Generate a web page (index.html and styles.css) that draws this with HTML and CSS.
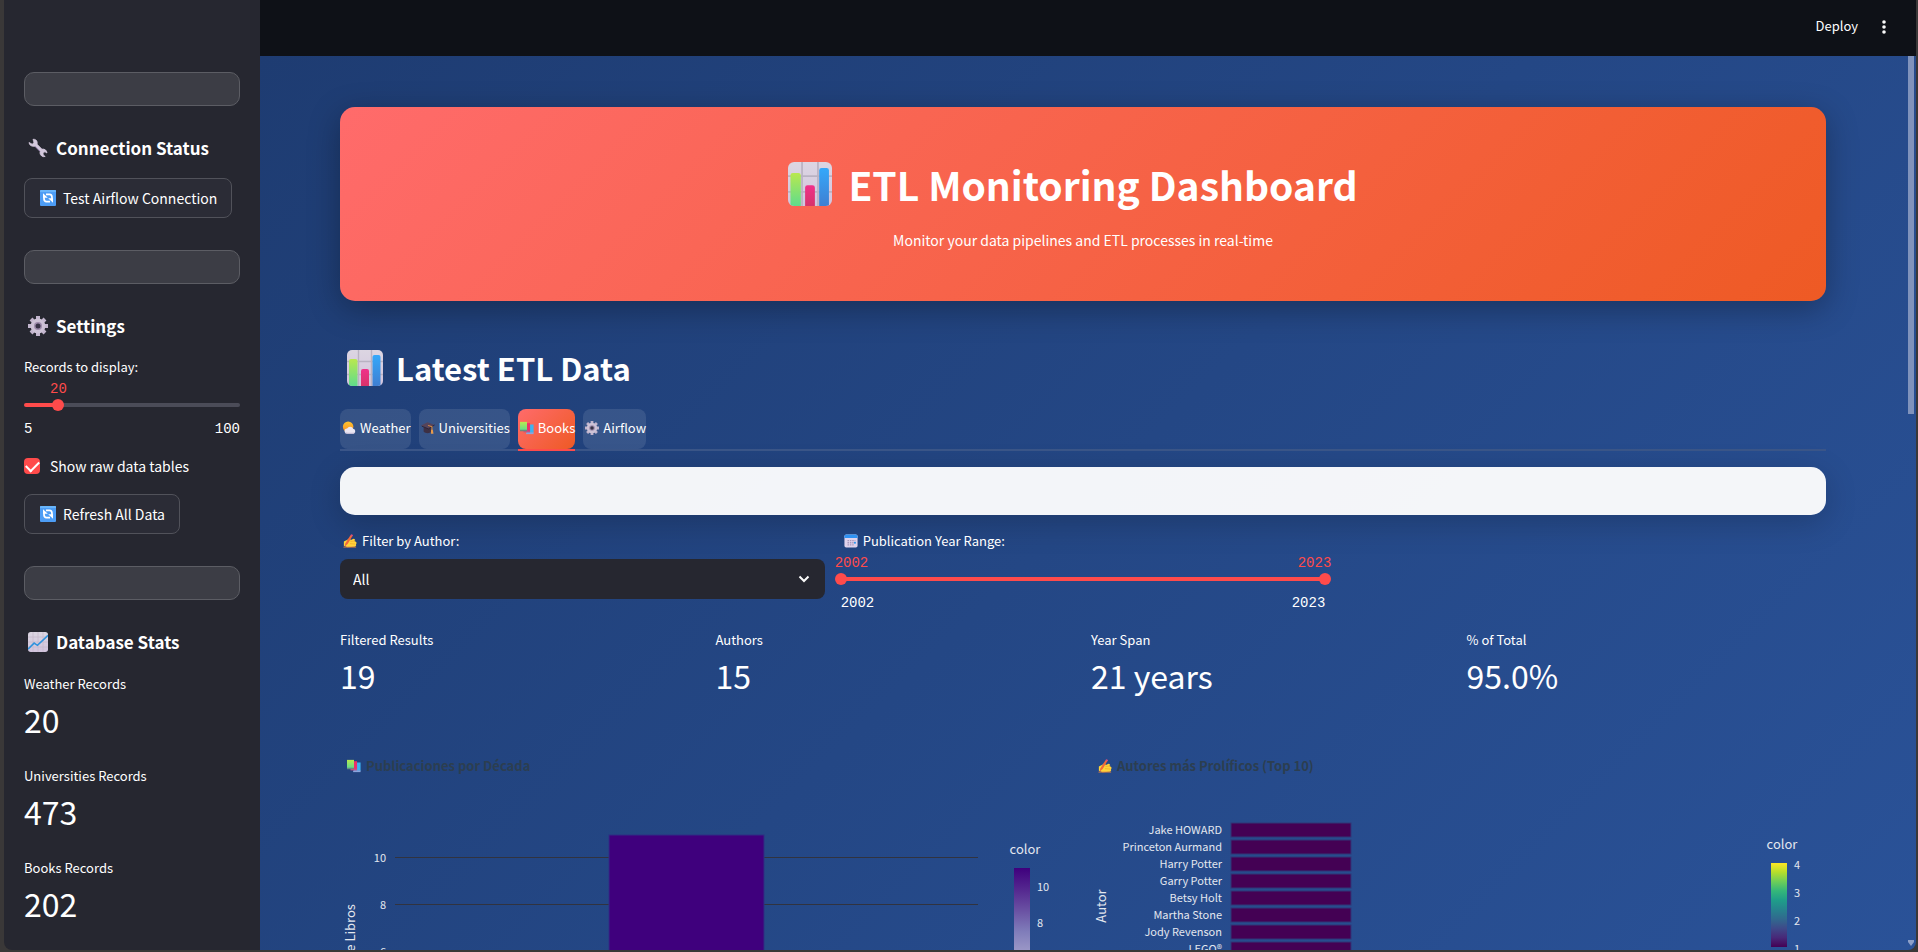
FILE: index.html
```html
<!DOCTYPE html>
<html lang="en">
<head>
<meta charset="utf-8">
<title>ETL Monitoring Dashboard</title>
<link rel="stylesheet" href="styles.css">
</head>
<body>
<svg class="defs" aria-hidden="true">
  <defs>
    <linearGradient id="gGreen" x1="0" y1="0" x2="0" y2="1"><stop offset="0" stop-color="#b9e84f"/><stop offset="1" stop-color="#5fdc8c"/></linearGradient>
    <linearGradient id="gPink" x1="0" y1="0" x2="0" y2="1"><stop offset="0" stop-color="#f0308a"/><stop offset="1" stop-color="#d6336a"/></linearGradient>
    <linearGradient id="gBlue" x1="0" y1="0" x2="0" y2="1"><stop offset="0" stop-color="#35a8fa"/><stop offset="1" stop-color="#3f7fd2"/></linearGradient>
    <linearGradient id="gPaper" x1="0" y1="0" x2="0" y2="1"><stop offset="0" stop-color="#dcd6e2"/><stop offset="1" stop-color="#d2c4dd"/></linearGradient>
    <linearGradient id="gSun" x1="0" y1="0" x2="0" y2="1"><stop offset="0" stop-color="#ffc52e"/><stop offset="1" stop-color="#f88f24"/></linearGradient>
    <linearGradient id="gPurples" x1="0" y1="0" x2="0" y2="1"><stop offset="0" stop-color="#3f007d"/><stop offset=".125" stop-color="#54278f"/><stop offset=".25" stop-color="#6a51a3"/><stop offset=".375" stop-color="#807dba"/><stop offset=".5" stop-color="#9e9ac8"/><stop offset=".75" stop-color="#dadaeb"/><stop offset="1" stop-color="#fcfbfd"/></linearGradient>
    <linearGradient id="gViridis" x1="0" y1="0" x2="0" y2="1"><stop offset="0" stop-color="#fde725"/><stop offset=".11" stop-color="#b5de2b"/><stop offset=".22" stop-color="#6ece58"/><stop offset=".33" stop-color="#35b779"/><stop offset=".44" stop-color="#1f9e89"/><stop offset=".56" stop-color="#26828e"/><stop offset=".67" stop-color="#31688e"/><stop offset=".78" stop-color="#3e4989"/><stop offset=".89" stop-color="#482878"/><stop offset="1" stop-color="#440154"/></linearGradient>
    <clipPath id="cRound"><rect width="36" height="36" rx="5"/></clipPath>
  </defs>
  <symbol id="i-bars" viewBox="0 0 36 36">
    <g clip-path="url(#cRound)"><rect width="36" height="36" fill="url(#gPaper)"/>
    <path d="M11.500 0V36M24.500 0V36M0 11.500H36M0 24.500H36" stroke="#b9b2c2" stroke-width="1.400"/>
    <path d="M2 36V11a2 2 0 0 1 2-2h4.500a2 2 0 0 1 2 2V36z" fill="url(#gGreen)"/>
    <path d="M14 36V21a2 2 0 0 1 2-2h4a2 2 0 0 1 2 2V36z" fill="url(#gPink)"/>
    <path d="M25.500 36V7a2 2 0 0 1 2-2h4a2 2 0 0 1 2 2V36z" fill="url(#gBlue)"/></g>
  </symbol>
  <symbol id="i-trend" viewBox="0 0 36 36">
    <g clip-path="url(#cRound)"><rect width="36" height="36" fill="url(#gPaper)"/>
    <path d="M9 0V36M18 0V36M27 0V36M0 9H36M0 18H36M0 27H36" stroke="#c6b8ca" stroke-width="1.300"/>
    <path d="M0 31L11 20L17 24L36 6" fill="none" stroke="#2f93dd" stroke-width="2.800"/></g>
  </symbol>
  <symbol id="i-wrench" viewBox="0 0 20 20">
    <path d="M1 4.500L4.200 6.200L6 4.600L5 1.300C7 1 9 2.200 9.200 4.300L9.100 6.300L14 11.200C16.300 10.700 18.700 12 19 15L17 13.800L15 14.600L15.200 17L17.200 18.500C14.500 19.300 12.300 17.400 12 15.200L12.100 13.300L7 8.200C4 8.900 1.200 7.400 1 4.500Z" fill="#d3c8dc" stroke="#d3c8dc" stroke-width=".8"/>
    <path d="M7 8.200L12.100 13.300" stroke="#a790c0" stroke-width="1"/>
  </symbol>
  <symbol id="i-gear" viewBox="0 0 20 20">
    <g stroke="#c2b5cd" stroke-width="4"><path d="M10 0V20M0 10H20M3 3L17 17M17 3L3 17"/></g>
    <circle cx="10" cy="10" r="7.400" fill="#cdc2d6"/><circle cx="10" cy="10" r="4" fill="#9d8bab"/><circle cx="10" cy="10" r="2.500" fill="#373246"/>
  </symbol>
  <symbol id="i-refresh" viewBox="0 0 16 16">
    <rect width="16" height="16" rx="1" fill="#4d9df5"/><path d="M0 1a1 1 0 0 1 1-1h14a1 1 0 0 1 1 1v1H0z" fill="#68b5fb"/>
    <path d="M6 4.300H9.500C11.300 4.300 12 5.500 12 7.500V9M10 11.700H6.500C4.700 11.700 4 10.500 4 8.500V7" fill="none" stroke="#fff" stroke-width="1.700"/>
    <path d="M3 3.200V7.800H7.800zM13 12.800V8.200H8.200z" fill="#fff"/>
  </symbol>
  <symbol id="i-weather" viewBox="0 0 16 16">
    <circle cx="7" cy="6.500" r="6" fill="url(#gSun)"/>
    <path d="M6 14.500a3 3 0 0 1-.2-6 4 4 0 0 1 7 .4 2.900 2.900 0 0 1 .4 5.600z" fill="#ece7f2"/><path d="M6 14.500h7.200a2.900 2.900 0 0 0 2-2c-3 1.500-8 1-11.800.3a3 3 0 0 0 2.600 1.700z" fill="#c6bdd6"/>
  </symbol>
  <symbol id="i-cap" viewBox="0 0 16 16">
    <path d="M3 7v5c2 2.500 7 2.500 9 0V7z" fill="#3d3044"/><path d="M0 5L7.500 1.500L15.500 4.500L8.500 9z" fill="#55445b"/><path d="M1 6L8.500 9L15.500 4.500" fill="none" stroke="#2b2233"/>
    <path d="M8 5L12.500 6.500V11" fill="none" stroke="#d58a43" stroke-width="1.200"/><path d="M11.500 10h2l.8 4.500h-3z" fill="#e79b4c"/>
  </symbol>
  <symbol id="i-books" viewBox="0 0 16 16">
    <path d="M8 4h7.500v9.500H8z" fill="#3cb4f2"/><path d="M7 13h8.500v2H7z" fill="#8ba6df"/>
    <path d="M5 2.500h6.500v9H5z" fill="#ec2f69"/><path d="M4 11h7.500v2H4z" fill="#c94f83"/>
    <path d="M0 1h8v9.500H0z" fill="url(#gGreen)"/><path d="M0 10h8v1.700H0z" fill="#668c80"/>
  </symbol>
  <symbol id="i-write" viewBox="0 0 16 16">
    <path d="M1 8.500L5 6.500C7 4.500 9 5 8.500 7L12 5.500C14 5.500 14 7 13 8L15 9C16 10 15.500 11.200 14.700 11.500C15.500 12.500 15 14 13.500 14.500L5 15L1 13.500z" fill="#ffd43b"/>
    <path d="M8.500 8.500L14 8M8 11L14 11.500" stroke="#f6a62a" stroke-width=".8"/>
    <path d="M8.500 1.500L10.800 2.200L5.500 11L1.800 14.500L2.800 10.500z" fill="#f2673c"/><path d="M9.200.3L11.500 1L10.800 2.600L8.500 1.800z" fill="#e8517c"/>
    <path d="M.5 15H15" stroke="#de7d3f" stroke-width="1"/>
  </symbol>
  <symbol id="i-cal" viewBox="0 0 16 16">
    <rect x=".5" y=".5" width="15" height="15" rx="2" fill="#e0d3ec"/><path d="M.5 4.500v-2a2 2 0 0 1 2-2h11a2 2 0 0 1 2 2v2z" fill="#2f92f2"/>
    <path d="M4 7.500h9M4 10h7M4 12.500h7" stroke="#a898bd" stroke-width="1.500" stroke-dasharray="1.700 1"/><rect x="11.500" y="9" width="2" height="2" fill="#2394ef"/>
  </symbol>
</svg>

<div class="app">
  <aside class="sidebar">
    <div class="blank"></div>
    <h3 class="side-title"><svg class="ico20"><use href="#i-wrench"/></svg>Connection Status</h3>
    <button class="btn" type="button"><svg class="ico16"><use href="#i-refresh"/></svg>Test Airflow Connection</button>
    <div class="blank gap-top"></div>
    <h3 class="side-title"><svg class="ico20"><use href="#i-gear"/></svg>Settings</h3>
    <label class="label side-label" for="records">Records to display:</label>
    <div class="slider">
      <div class="slider-values one"><output for="records">20</output></div>
      <div class="slider-body">
        <div class="track partial"></div>
        <input id="records" type="range" min="5" max="100" value="20">
      </div>
      <div class="limits"><span>5</span><span>100</span></div>
    </div>
    <label class="check"><input type="checkbox" checked>Show raw data tables</label>
    <button class="btn" type="button"><svg class="ico16"><use href="#i-refresh"/></svg>Refresh All Data</button>
    <div class="blank gap-top"></div>
    <h3 class="side-title"><svg class="ico20"><use href="#i-trend"/></svg>Database Stats</h3>
    <div class="stats">
      <div class="metric"><div class="label">Weather Records</div><div class="value">20</div></div>
      <div class="metric"><div class="label">Universities Records</div><div class="value">473</div></div>
      <div class="metric"><div class="label">Books Records</div><div class="value">202</div></div>
    </div>
  </aside>

  <div class="page">
    <header class="topbar">
      <button class="plain" type="button">Deploy</button>
      <button class="plain" type="button" aria-label="Main menu"><svg class="dots" viewBox="0 0 4 14"><circle cx="2" cy="2" r="1.800"/><circle cx="2" cy="7" r="1.800"/><circle cx="2" cy="12" r="1.800"/></svg></button>
    </header>
    <main class="main">
      <section class="hero">
        <h1><svg class="ico44"><use href="#i-bars"/></svg>ETL Monitoring Dashboard</h1>
        <p>Monitor your data pipelines and ETL processes in real-time</p>
      </section>
      <h2 class="section-title"><svg class="ico36"><use href="#i-bars"/></svg>Latest ETL Data</h2>
      <div class="tabs" role="tablist">
        <button class="tab" role="tab" type="button"><svg class="ico14"><use href="#i-weather"/></svg>Weather</button>
        <button class="tab" role="tab" type="button"><svg class="ico14"><use href="#i-cap"/></svg>Universities</button>
        <button class="tab active" role="tab" type="button" aria-selected="true"><svg class="ico14"><use href="#i-books"/></svg>Books</button>
        <button class="tab" role="tab" type="button"><svg class="ico14"><use href="#i-gear"/></svg>Airflow</button>
      </div>
      <div class="panel"></div>
      <div class="filters">
        <div>
          <label class="label" for="author"><svg class="ico14"><use href="#i-write"/></svg>Filter by Author:</label>
          <div class="select">
            <select id="author"><option>All</option></select>
            <svg class="chevron" viewBox="0 0 12 8"><path d="M1.500 1.500L6 6L10.500 1.500"/></svg>
          </div>
        </div>
        <div>
          <label class="label" for="year-from"><svg class="ico14"><use href="#i-cal"/></svg>Publication Year Range:</label>
          <div class="slider">
            <div class="slider-values both"><output>2002</output><output>2023</output></div>
            <div class="slider-body">
              <div class="track full"></div>
              <input id="year-from" type="range" min="2002" max="2023" value="2002">
              <input type="range" min="2002" max="2023" value="2023" aria-label="Last publication year">
            </div>
            <div class="limits"><span>2002</span><span>2023</span></div>
          </div>
        </div>
      </div>
      <div class="metrics">
        <div class="metric"><div class="label">Filtered Results</div><div class="value">19</div></div>
        <div class="metric"><div class="label">Authors</div><div class="value">15</div></div>
        <div class="metric"><div class="label">Year Span</div><div class="value">21 years</div></div>
        <div class="metric"><div class="label">% of Total</div><div class="value">95.0%</div></div>
      </div>
      <div class="charts">
        <svg class="chart" viewBox="0 0 735 450" role="img" aria-label="Publicaciones por Década">
          <use href="#i-books" x="7" y="31" width="14" height="14"/>
          <text class="chart-title" x="26" y="43">Publicaciones por Década</text>
          <path class="grid" d="M55 129.500H638M55 176.500H638M55 223.500H638M55 270.500H638M55 317.500H638"/>
          <rect class="bar-purple" x="269" y="107" width="155" height="258"/>
          <g class="tick end"><text x="46" y="134">10</text><text x="46" y="181">8</text><text x="46" y="228">6</text><text x="46" y="275">4</text><text x="46" y="322">2</text></g>
          <text class="axis" transform="translate(15 230) rotate(-90)">Número de Libros</text>
          <text class="axis" x="685" y="126">color</text>
          <rect x="674" y="140" width="16" height="170" fill="url(#gPurples)"/>
          <g class="tick"><text x="697" y="163">10</text><text x="697" y="199">8</text><text x="697" y="235">6</text></g>
        </svg>
        <svg class="chart" viewBox="0 0 735 450" role="img" aria-label="Autores más Prolíficos (Top 10)">
          <use href="#i-write" x="7" y="31" width="14" height="14"/>
          <text class="chart-title" x="26" y="43">Autores más Prolíficos (Top 10)</text>
          <g class="bars-dark"><rect x="140" y="95" width="120" height="14"/><rect x="140" y="112" width="120" height="14"/><rect x="140" y="129" width="120" height="14"/><rect x="140" y="146" width="120" height="14"/><rect x="140" y="163" width="120" height="14"/><rect x="140" y="180" width="120" height="14"/><rect x="140" y="197" width="120" height="14"/><rect x="140" y="214" width="120" height="14"/></g>
          <g class="tick end"><text x="131" y="106">Jake HOWARD</text><text x="131" y="123">Princeton Aurmand</text><text x="131" y="140">Harry Potter</text><text x="131" y="157">Garry Potter</text><text x="131" y="174">Betsy Holt</text><text x="131" y="191">Martha Stone</text><text x="131" y="208">Jody Revenson</text><text x="131" y="225">LEGO®</text></g>
          <text class="axis" transform="translate(15 178) rotate(-90)">Autor</text>
          <text class="axis" x="691" y="121">color</text>
          <rect x="680" y="135" width="16" height="84" fill="url(#gViridis)"/>
          <g class="tick"><text x="703" y="141">4</text><text x="703" y="169">3</text><text x="703" y="197">2</text><text x="703" y="225">1</text></g>
        </svg>
      </div>
      <div class="scroll-thumb"></div>
      <svg class="scroll-arrow" viewBox="0 0 6 6"><path d="M0 0H6V2L3 6L0 2Z"/></svg>
    </main>
  </div>
</div>
</body>
</html>
```
FILE: styles.css
```css
* { box-sizing: border-box; }

body {
  margin: 0;
  background: #3a3838;
  color: #fff;
  font: 14px/20px "Noto Sans CJK JP", "Noto Sans", sans-serif;
}

h1, h2, h3, p { margin: 0; }
button, select, input { font: inherit; color: inherit; margin: 0; }
svg { flex: none; }
.defs { position: absolute; width: 0; height: 0; }

.ico14 { width: 14px; height: 14px; margin: 0 5px 0 3px; }
.ico16 { width: 16px; height: 16px; margin-right: 7px; }
.ico20 { width: 20px; height: 20px; margin: 0 8px 0 4px; }
.ico36 { width: 36px; height: 36px; margin: 0 13px 0 7px; }
.ico44 { width: 44px; height: 44px; margin: 0 16px 0 8px; }

.app {
  display: flex;
  height: calc(100vh - 2px);
  margin: 0 2px 0 4px;
  border-radius: 0 0 8px 8px;
  overflow: hidden;
}

/* Sidebar */
.sidebar {
  flex: none;
  width: 256px;
  padding: 72px 20px 0;
  background: #262730;
}
.blank {
  height: 34px;
  border: 1px solid #5c5d64;
  border-radius: 10px;
  background: #3c3d45;
}
.gap-top { margin-top: 32px; }
.side-title {
  display: flex;
  align-items: center;
  margin: 28px 0 16px;
  font-size: 17px;
  line-height: 28px;
}
.btn {
  display: flex;
  align-items: center;
  height: 40px;
  padding: 0 14px 1px 15px;
  border: 1px solid #51525a;
  border-radius: 8px;
  background: #2b2c36;
  white-space: nowrap;
}
.label {
  display: flex;
  align-items: center;
  font-size: 13px;
  line-height: 20px;
}
.side-label { margin-top: 17px; }
.check {
  display: flex;
  align-items: center;
  gap: 10px;
  margin: 18px 0;
}
.check input {
  appearance: none;
  width: 16px;
  height: 16px;
  border-radius: 4px;
  background: #ff4b4b;
  display: grid;
  place-items: center;
}
.check input:checked::after {
  content: "";
  width: 11px;
  height: 6px;
  border: solid #fff;
  border-width: 0 0 2px 2px;
  transform: translateY(-1px) rotate(-45deg);
}
.stats { display: grid; gap: 27px; padding-top: 2px; }
.value {
  margin-top: 5px;
  font-size: 32px;
  line-height: 40px;
}

/* Sliders */
.slider { font: 14px/18px "Liberation Mono", monospace; padding-top: 3px; }
.slider-values { color: #ff4b4b; }
.slider-values.one { padding-left: 26px; }
.slider-values.both { display: flex; justify-content: space-between; margin: 0 -6px; }
.slider-body { position: relative; height: 14px; margin: 0 -6px; }
.track {
  position: absolute;
  inset: 5px 6px;
  border-radius: 2px;
}
.track.partial { background: linear-gradient(90deg, #ff4b4b 16%, #4b4c58 16%); }
.track.full { background: #ff4b4b; }
.slider-body input {
  position: absolute;
  inset: 0;
  width: 100%;
  height: 14px;
  appearance: none;
  background: none;
  pointer-events: none;
}
.slider-body input::-webkit-slider-thumb {
  appearance: none;
  width: 12px;
  height: 12px;
  border-radius: 50%;
  background: #ff4b4b;
  pointer-events: auto;
}
.limits { display: flex; justify-content: space-between; margin-top: 8px; }

/* Page */
.page { flex: 1; min-width: 0; display: flex; flex-direction: column; }
.topbar {
  flex: none;
  display: flex;
  justify-content: flex-end;
  align-items: center;
  gap: 24px;
  height: 56px;
  padding: 0 30px 5px;
  background: #0e1117;
}
.plain { display: flex; padding: 0; border: 0; background: none; font-size: 13px; line-height: 20px; }
.dots { width: 4px; height: 14px; margin-top: 3px; fill: #fafafa; }
.main {
  position: relative;
  flex: 1;
  min-height: 0;
  overflow: hidden;
  padding: 51px 90px 0 80px;
  background: linear-gradient(135deg, #1e3c72 0%, #2a5298 100%);
}
.hero {
  padding: 47px 32px 49px;
  border-radius: 15px;
  background: linear-gradient(135deg, #ff6b6b 0%, #ee5a24 100%);
  box-shadow: 0 8px 32px rgba(0, 0, 0, .3);
  text-align: center;
}
.hero h1 {
  display: flex;
  justify-content: center;
  align-items: center;
  padding-right: 28px;
  font-size: 39px;
  line-height: 60px;
}
.hero p { margin-top: 14px; line-height: 24px; }
.section-title {
  display: flex;
  align-items: center;
  margin: 45px 0 19px;
  font-size: 31px;
  line-height: 44px;
}
.tabs {
  display: flex;
  gap: 8px;
  border-bottom: 2px solid #3b5689;
}
.tab {
  display: flex;
  align-items: center;
  height: 40px;
  padding: 0 0 2px;
  border: 0;
  border-radius: 8px;
  background: rgba(255, 255, 255, .1);
  font-size: 13px;
  position: relative;
}
.tab .ico14 { margin: 0 4px 0 2px; }
.tab.active { background: linear-gradient(135deg, #ff6b6b 0%, #ee5a24 100%); }
.tab.active::after {
  content: "";
  position: absolute;
  left: 0;
  right: 0;
  top: 100%;
  height: 2px;
  background: #ff4b4b;
}
.panel {
  height: 48px;
  margin: 16px 0;
  border-radius: 15px;
  background: rgba(255, 255, 255, .95);
  box-shadow: 0 8px 32px rgba(0, 0, 0, .2);
}
.filters {
  display: grid;
  grid-template-columns: repeat(3, 1fr);
  gap: 16px;
}
.select { position: relative; margin-top: 8px; }
.select select {
  width: 100%;
  height: 40px;
  padding: 0 40px 1px 13px;
  border: 0;
  border-radius: 8px;
  appearance: none;
  background: #262730;
}
.chevron {
  position: absolute;
  right: 15px;
  top: 16px;
  width: 12px;
  height: 8px;
  fill: none;
  stroke: #fafafa;
  stroke-width: 2;
  pointer-events: none;
}
.metrics {
  display: grid;
  grid-template-columns: repeat(4, 1fr);
  gap: 16px;
  margin: 18px 0 33px;
}
.charts {
  display: grid;
  grid-template-columns: repeat(2, 1fr);
  gap: 16px;
}
.chart { display: block; width: 100%; }
.chart-title { font-size: 13px; font-weight: 700; fill: #2c3e50; }
.axis { font-size: 13px; fill: #e3e7ef; text-anchor: middle; }
.tick { font-size: 11px; fill: #e3e7ef; }
.end { text-anchor: end; }
.grid { stroke: #31333f; }
.bar-purple { fill: #3f007d; stroke: #2f2e83; }
.bars-dark { fill: #440154; stroke: #313777; }

.scroll-thumb {
  position: absolute;
  right: 2px;
  top: 0;
  width: 6px;
  height: 40%;
  background: #8093bc;
}
.scroll-arrow {
  position: absolute;
  right: 2px;
  bottom: 4px;
  width: 6px;
  height: 6px;
  fill: #8da0c8;
}
```
